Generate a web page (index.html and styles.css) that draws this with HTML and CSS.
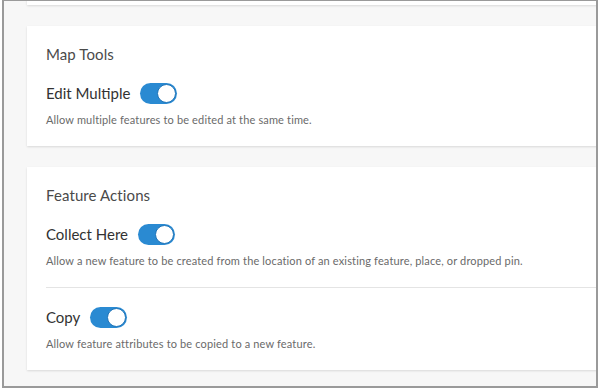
FILE: index.html
```html
<!DOCTYPE html>
<html lang="en">
<head>
<meta charset="utf-8">
<title>Settings</title>
<link rel="stylesheet" href="styles.css">
</head>
<body>
<div class="frame">
  <div class="stack">
    <div class="card card-prev"></div>
    <section class="card">
      <h2 class="card-title">Map Tools</h2>
      <div class="item">
        <div class="row">
          <span class="label">Edit Multiple</span>
          <span class="toggle"><span class="knob"></span></span>
        </div>
        <p class="desc">Allow multiple features to be edited at the same time.</p>
      </div>
    </section>
    <section class="card">
      <h2 class="card-title">Feature Actions</h2>
      <div class="item">
        <div class="row">
          <span class="label">Collect Here</span>
          <span class="toggle"><span class="knob"></span></span>
        </div>
        <p class="desc">Allow a new feature to be created from the location of an existing feature, place, or dropped pin.</p>
      </div>
      <div class="item item-sep">
        <div class="row">
          <span class="label">Copy</span>
          <span class="toggle"><span class="knob"></span></span>
        </div>
        <p class="desc">Allow feature attributes to be copied to a new feature.</p>
      </div>
    </section>
  </div>
</div>
</body>
</html>
```

FILE: styles.css
```css
html, body {
  margin: 0;
  padding: 0;
  background: #ffffff;
}

body {
  font-family: Lato, "Open Sans", "Liberation Sans", sans-serif;
  width: 600px;
  height: 390px;
  overflow: hidden;
}

.frame {
  box-sizing: border-box;
  margin-left: 2px;
  width: 596px;
  height: 388px;
  border: 2px solid #9a9a9a;
  border-top-width: 1px;
  background: #f7f7f7;
  overflow: hidden;
}

.stack {
  display: flex;
  flex-direction: column;
  gap: 21px;
  padding-left: 23px;
  margin-top: -20px;
}

.card {
  box-sizing: border-box;
  width: 600px;
  background: #ffffff;
  box-shadow: 0 1px 2px rgba(0, 0, 0, 0.12);
  padding: 18px 19px 0;
}

.card-prev {
  height: 24px;
  padding: 0;
}

.card-title {
  margin: 0;
  font-size: 15px;
  line-height: 20px;
  font-weight: 400;
  color: #4a4a4a;
  letter-spacing: 0.1px;
}

.item {
  padding: 19px 0 18px;
  width: 551px;
}

.item-sep {
  border-top: 1px solid #e4e4e4;
  padding-top: 19px;
}

.row {
  display: flex;
  align-items: center;
  gap: 10px;
  height: 21px;
}

.label {
  font-size: 15px;
  color: #323232;
  line-height: 21px;
}

.toggle {
  position: relative;
  box-sizing: border-box;
  width: 37px;
  height: 21px;
  border-radius: 11px;
  background: #2a8ad2;
  flex: none;
}

.knob {
  position: absolute;
  top: 1px;
  right: 1px;
  box-sizing: border-box;
  width: 19px;
  height: 19px;
  border-radius: 50%;
  background: #ffffff;
  border: 1.5px solid #1f74b8;
}

.desc {
  margin: 8px 0 0;
  font-size: 11px;
  line-height: 16px;
  color: #6a6a6a;
  letter-spacing: 0.15px;
}
```
